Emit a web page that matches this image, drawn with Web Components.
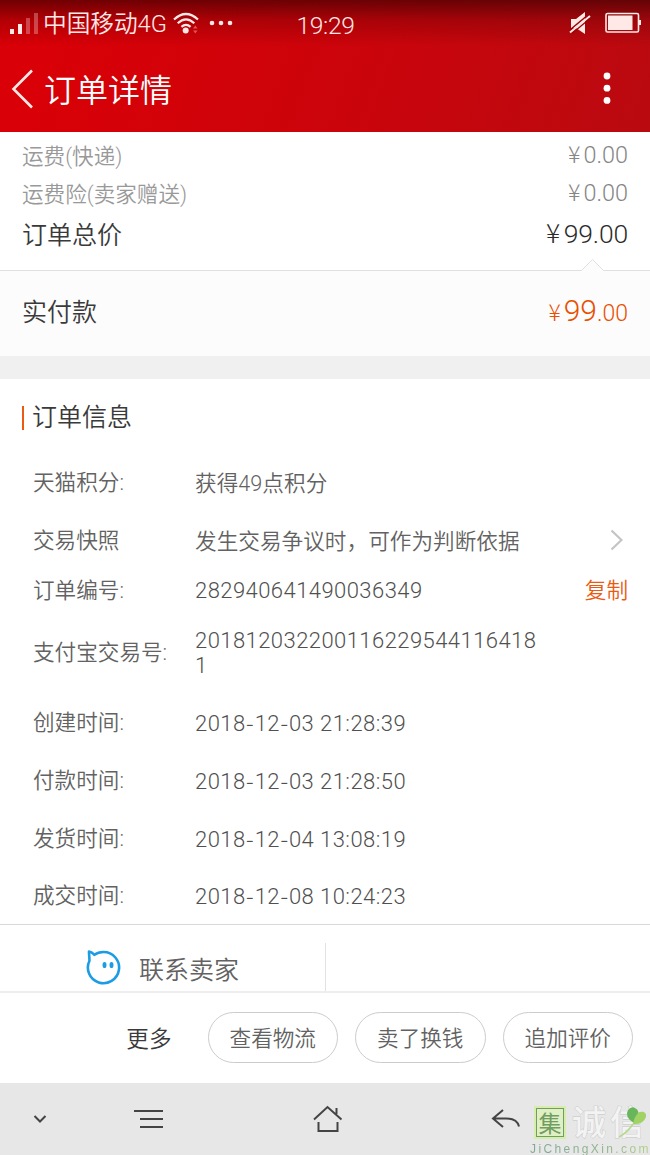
<!DOCTYPE html>
<html lang="zh-CN">
<head>
<meta charset="UTF-8">
<title>订单详情</title>
<style>
  body {
    margin: 0;
    width: 650px;
    height: 1155px;
    overflow: hidden;
    background: #fff;
    color: #626262;
    font-family: Roboto, "Noto Sans CJK SC", sans-serif;
    font-weight: 350;
    font-size: 21.6px;
  }
</style>
</head>
<body>
  <order-page></order-page>

<script>
class StatusBar extends HTMLElement {
  connectedCallback() {
    this.attachShadow({ mode: 'open' });
    this.shadowRoot.innerHTML = `
      <style>
        :host {
          display: grid;
          grid-template-columns: 1fr auto 1fr;
          align-items: center;
          height: 46px;
          padding: 0 9px 0 10px;
          color: #ffe9e7;
          font-size: 23.7px;
          line-height: 44px;
        }
        .left, .right { display: flex; align-items: center; }
        .left { margin-top: -2px; }
        .right { justify-content: flex-end; gap: 14px; margin-top: -2px; }
        .carrier { margin: 0 6px 0 5px; padding-top: 2px; white-space: nowrap; letter-spacing: -.05px; }
        .time { font-size: 24.6px; padding-top: 4px; letter-spacing: -0.3px; }
        svg { display: block; flex: none; }
      </style>
      <div class="left">
        <svg width="28" height="24" viewBox="0 0 28 24" fill="#ffe9e7">
          <rect x="0" y="18" width="4" height="5"/>
          <rect x="8" y="13" width="4" height="10"/>
          <rect x="16" y="7" width="4" height="16" opacity=".3"/>
          <rect x="24" y="2" width="4" height="21" opacity=".3"/>
        </svg>
        <span class="carrier">中国移动4G</span>
        <svg width="26" height="22" viewBox="0 0 26 22" fill="none" stroke="#ffe9e7" stroke-width="2.2">
          <path d="M1 7.5Q13-3.5 25 7.5M4.7 11.3Q13 3.4 21.3 11.3M8.4 14.8Q13 10.8 17.6 14.8"/>
          <circle cx="12.7" cy="18.5" r="3" fill="#ffe9e7" stroke="none"/>
          <path d="M20 16.5l2.3-3 2.3 3zM20 18.5l2.3 3 2.3-3z" fill="#e8504e" stroke="none"/>
        </svg>
        <svg width="24" height="6" viewBox="0 0 24 6" fill="#ffe9e7" style="margin-left:10px">
          <circle cx="3" cy="3" r="2.3"/><circle cx="12" cy="3" r="2.3"/><circle cx="21" cy="3" r="2.3"/>
        </svg>
      </div>
      <div class="time">19:29</div>
      <div class="right">
        <svg width="22" height="24" viewBox="0 0 22 24">
          <path d="M2 8h5l9-7v22l-9-6H2z" fill="#ffe9e7"/>
          <path d="M0 19.7L19.5 3.5" stroke="#9c0507" stroke-width="1.5"/>
          <path d="M1 21.5L21 5" stroke="#ffe9e7" stroke-width="2"/>
          <path d="M3 22.5L21 7.6" stroke="#9c0507" stroke-width="1.3"/>
        </svg>
        <svg width="36" height="22" viewBox="0 0 36 22">
          <rect x="1" y="1.5" width="32.5" height="18.5" rx="1.5" fill="none" stroke="#ffe9e7" stroke-width="1.6"/>
          <rect x="3" y="3.5" width="24.5" height="14.5" fill="#ffe9e7"/>
          <rect x="34" y="8" width="2" height="5" fill="#ffe9e7"/>
        </svg>
      </div>
    `;
  }
}

class TitleBar extends HTMLElement {
  connectedCallback() {
    this.attachShadow({ mode: 'open' });
    this.shadowRoot.innerHTML = `
      <style>
        :host {
          display: flex;
          align-items: center;
          height: 86px;
          padding: 0 40px 0 11px;
          box-sizing: border-box;
          color: #fff;
        }
        svg { display: block; }
        h1 {
          flex: 1;
          margin: 4px 0 0 10px;
          font-size: 32px;
          line-height: 40px;
          font-weight: 350;
        }
      </style>
      <svg width="23" height="40" viewBox="0 0 23 40" fill="none" stroke="#ffe9e7" stroke-width="2.6">
        <path d="M21 1.5L2.5 20 21 38.5"/>
      </svg>
      <h1><slot></slot></h1>
      <svg width="6" height="32" viewBox="0 0 6 32" fill="#fff" style="overflow:visible">
        <circle cx="3" cy="3" r="3.4"/><circle cx="3" cy="15.2" r="3.4"/><circle cx="3" cy="27.4" r="3.4"/>
      </svg>
    `;
  }
}

class PriceRow extends HTMLElement {
  connectedCallback() {
    this.attachShadow({ mode: 'open' });
    this.shadowRoot.innerHTML = `
      <style>
        :host {
          display: flex;
          justify-content: space-between;
          padding: 0 22px;
          height: 38px;
          line-height: 40px;
          color: #999;
        }
        :host([total]) { height: 44px; line-height: 46px; color: #3a3a3a; font-size: 25px; }
        :host([paid]) { height: 85px; line-height: 83px; color: #3a3a3a; font-size: 25px; background: #fcfcfc; }
        .amount { display: block; font-size: 23.4px; line-height: 32px; white-space: nowrap; color: #868686; }
        :host([total]) .amount { font-size: 26.5px; line-height: 38px; letter-spacing: -.2px; color: #2b2b2b; }
        :host([paid]) .amount { color: #e85000; font-size: 23px; line-height: 80px; }
        ::slotted(b) { font-weight: 350; font-size: 30px; }
        .yen { font-family: "Noto Sans CJK SC", sans-serif; font-weight: 300; margin-right: 3px; }
        :host([total]) .yen { margin-right: 4px; }
      </style>
      <span>${this.getAttribute('label')}</span>
      <span class="amount"><span class="yen">¥</span><slot></slot></span>
    `;
  }
}

class InfoRow extends HTMLElement {
  connectedCallback() {
    this.attachShadow({ mode: 'open' });
    this.shadowRoot.innerHTML = `
      <style>
        :host {
          display: grid;
          grid-template-columns: 162px 345px 1fr;
          align-items: center;
          height: 58px;
          padding: 0 22px 0 33px;
          box-sizing: border-box;
          line-height: 25px;
        }
        :host([size="small"]) { height: 42px; padding-bottom: 1px; }
        :host([size="tall"]) { height: 82px; padding-bottom: 1px; }
        .label { white-space: nowrap; padding-bottom: 1px; }
        .value { overflow-wrap: anywhere; letter-spacing: .05px; }
        :host(.number) .value { font-size: 22px; letter-spacing: .44px; color: #505050; }
        :host(.date) .value { padding-top: 2px; }
        .action { justify-self: end; color: #ea5a12; }
        ::slotted(i) { font-family: Inter, sans-serif; font-style: normal; font-size: 19px; }
      </style>
      <span class="label">${this.getAttribute('label')}</span>
      <span class="value"><slot></slot></span>
      <span class="action"><slot name="action"></slot></span>
    `;
  }
}

class PillButton extends HTMLElement {
  connectedCallback() {
    this.attachShadow({ mode: 'open' });
    this.shadowRoot.innerHTML = `
      <style>
        :host {
          display: block;
          width: 130.5px;
          height: 51px;
          box-sizing: border-box;
          border: 1px solid #ccc;
          border-radius: 26px;
          text-align: center;
          line-height: 51px;
        }
      </style>
      <slot></slot>
    `;
  }
}

class SellerBar extends HTMLElement {
  connectedCallback() {
    this.attachShadow({ mode: 'open' });
    this.shadowRoot.innerHTML = `
      <style>
        :host {
          display: flex;
          align-items: flex-end;
          height: 69px;
          box-sizing: border-box;
          border-top: 1px solid #d9d9d9;
          border-bottom: 2px solid #eee;
        }
        .cell {
          display: flex;
          align-items: center;
          width: 326px;
          height: 48px;
          padding-left: 86px;
          box-sizing: border-box;
          border-right: 1px solid #e2e2e2;
          font-size: 25px;
        }
        svg { margin-right: 17px; }
        span { padding-top: 1px; }
      </style>
      <div class="cell">
        <svg width="36" height="36" viewBox="0 0 36 36" fill="none" stroke="#1b9ce5" stroke-width="2.6">
          <path d="M3.3 12.5C3.8 10 2.9 6 3 2.6Q6 3 8.5 5.8Q12 3 17.5 3A15.6 15.6 0 1 1 3.6 11.5" stroke-linejoin="round"/>
          <ellipse cx="18.5" cy="16" rx="2" ry="3.1" fill="#1b9ce5" stroke="none"/>
          <ellipse cx="25.5" cy="16" rx="2" ry="3.1" fill="#1b9ce5" stroke="none"/>
        </svg>
        <span><slot></slot></span>
      </div>
    `;
  }
}

class SiteMark extends HTMLElement {
  connectedCallback() {
    this.attachShadow({ mode: 'open' });
    this.shadowRoot.innerHTML = `
      <style>
        :host {
          display: block;
          width: 120px;
          height: 53px;
          position: absolute;
          right: 0;
          bottom: 0;
        }
        .names { display: flex; align-items: center; height: 41px; padding-left: 6px; }
        .seal {
          width: 26px;
          height: 27px;
          border: 1.5px solid #6f9d62;
          background: #e0efc4;
          box-shadow: 0 0 0 2px #d6edac;
          color: #6f9d62;
          font: 400 23px/26px "Noto Sans CJK SC", sans-serif;
          text-align: center;
        }
        .name {
          margin-left: 8px;
          color: #f3f3f3;
          font: 500 34px/32px "Noto Sans CJK SC", sans-serif;
          letter-spacing: 4px;
          margin-right: -4px;
          height: 36px;
          white-space: nowrap;
          -webkit-text-stroke: .8px #c4c4c4;
          paint-order: stroke fill;
        }
        .url {
          font: 400 12px/12px "Liberation Sans", sans-serif;
          letter-spacing: 2.4px;
          white-space: nowrap;
          background: linear-gradient(90deg, #7fa896, #8fb38c 60%, #b2d488);
          -webkit-background-clip: text;
          color: transparent;
          margin-right: -3px;
        }
        svg { position: absolute; right: 1px; top: 2px; }
      </style>
      <div class="names">
        <span class="seal">集</span>
        <span class="name">诚信</span>
      </div>
      <div class="url">JiChengXin.com</div>
      <svg width="34" height="34" viewBox="0 0 34 34">
        <path d="M4 33Q13 28 18 20" fill="none" stroke="#b4d98c" stroke-width="1.5"/>
        <path d="M19 19Q9 13 13 6Q18 0 23 7Q25 11 19 19z" fill="#69b55c"/>
        <path d="M18 20Q19 13 24 8Q32 7 31 13Q28 21 18 20z" fill="#a0d265"/>
      </svg>
    `;
  }
}

class SystemNav extends HTMLElement {
  connectedCallback() {
    this.attachShadow({ mode: 'open' });
    this.shadowRoot.innerHTML = `
      <style>
        :host {
          display: flex;
          align-items: center;
          position: relative;
          height: 72px;
          padding-left: 33px;
          background: #e7e7e7;
        }
        svg { display: block; fill: none; stroke: #444; stroke-width: 2; }
      </style>
      <svg width="14" height="10" viewBox="0 0 14 10"><path d="M1.5 2L7 7.5 12.5 2"/></svg>
      <svg width="30" height="20" viewBox="0 0 30 20" style="margin-left:87px"><path d="M0 2h29M6 10h23M6 18h23"/></svg>
      <svg width="30" height="28" viewBox="0 0 30 28" style="margin-left:149px">
        <path d="M1 14.5L14.5 2 28.5 14.5M23.5 9V3M5.5 17V26H24.5V17"/>
      </svg>
      <svg width="30" height="20" viewBox="0 0 30 20" style="margin-left:148px">
        <path d="M12 1L2 9.5 12 18M2 9.5H15Q26 9.5 28 17.5"/>
      </svg>
      <site-mark></site-mark>
    `;
  }
}

class OrderPage extends HTMLElement {
  connectedCallback() {
    this.attachShadow({ mode: 'open' });
    this.shadowRoot.innerHTML = `
      <style>
        :host { display: block; }
        header {
          height: 132px;
          background:
            linear-gradient(180deg, rgba(40, 0, 0, .6), rgba(60, 0, 0, .25) 20px, rgba(60, 0, 0, 0) 46px),
            linear-gradient(110deg, #d90007 10%, #cb040b 55%, #b90a10);
        }
        .prices { height: 138px; padding-top: 5px; box-sizing: border-box; }
        .line { display: block; height: 14px; margin-top: -13px; position: relative; }
        .gap { height: 23px; background: #f0f0f0; }
        h2 {
          display: flex;
          align-items: center;
          gap: 8px;
          margin: 0;
          height: 75px;
          padding: 3px 0 0 22px;
          box-sizing: border-box;
          color: #3a3a3a;
          font-size: 25px;
          line-height: 30px;
          font-weight: 350;
        }
        h2::before { content: ''; width: 2px; height: 24px; background: #ea5a12; }
        .chevron { display: block; margin: 0 5px 2px 0; }
        .actions {
          display: flex;
          align-items: center;
          justify-content: flex-end;
          gap: 17px;
          height: 90px;
          padding: 0 17px 1px 0;
          box-sizing: border-box;
        }
        .more { color: #3a3a3a; font-size: 22.6px; margin-right: 19px; }
      </style>
      <header>
        <status-bar></status-bar>
        <title-bar>订单详情</title-bar>
      </header>
      <div class="prices">
        <price-row label="运费(快递)">0.00</price-row>
        <price-row label="运费险(卖家赠送)">0.00</price-row>
        <price-row label="订单总价" total>99.00</price-row>
      </div>
      <svg class="line" width="650" height="14" viewBox="0 0 650 14">
        <path d="M0 13.5H581.5L592.5 2.5 603.5 13.5H650" fill="#fcfcfc" stroke="#e0e0e0"/>
      </svg>
      <price-row label="实付款" paid><b>99</b>.00</price-row>
      <div class="gap"></div>
      <h2>订单信息</h2>
      <info-row label="天猫积分:">获得49点积分</info-row>
      <info-row label="交易快照">发生交易争议时，可作为判断依据
        <svg slot="action" class="chevron" width="13" height="22" viewBox="0 0 13 22" fill="none" stroke="#c4c4c4" stroke-width="2.2"><path d="M1.5 1.5L11.5 11 1.5 20.5"/></svg>
      </info-row>
      <info-row class="number" label="订单编号:" size="small">282940641490036349<span slot="action">复制</span></info-row>
      <info-row class="number" label="支付宝交易号:" size="tall">2018120322001162295441164181</info-row>
      <info-row class="number date" label="创建时间:">2018<i>-</i>12<i>-</i>03 21:28:39</info-row>
      <info-row class="number date" label="付款时间:">2018<i>-</i>12<i>-</i>03 21:28:50</info-row>
      <info-row class="number date" label="发货时间:">2018<i>-</i>12<i>-</i>04 13:08:19</info-row>
      <info-row class="number date" label="成交时间:" style="height:56px">2018<i>-</i>12<i>-</i>08 10:24:23</info-row>
      <seller-bar>联系卖家</seller-bar>
      <div class="actions">
        <span class="more">更多</span>
        <pill-button>查看物流</pill-button>
        <pill-button>卖了换钱</pill-button>
        <pill-button>追加评价</pill-button>
      </div>
      <system-nav></system-nav>
    `;
  }
}

customElements.define('status-bar', StatusBar);
customElements.define('title-bar', TitleBar);
customElements.define('price-row', PriceRow);
customElements.define('info-row', InfoRow);
customElements.define('pill-button', PillButton);
customElements.define('seller-bar', SellerBar);
customElements.define('site-mark', SiteMark);
customElements.define('system-nav', SystemNav);
customElements.define('order-page', OrderPage);
</script>
</body>
</html>
